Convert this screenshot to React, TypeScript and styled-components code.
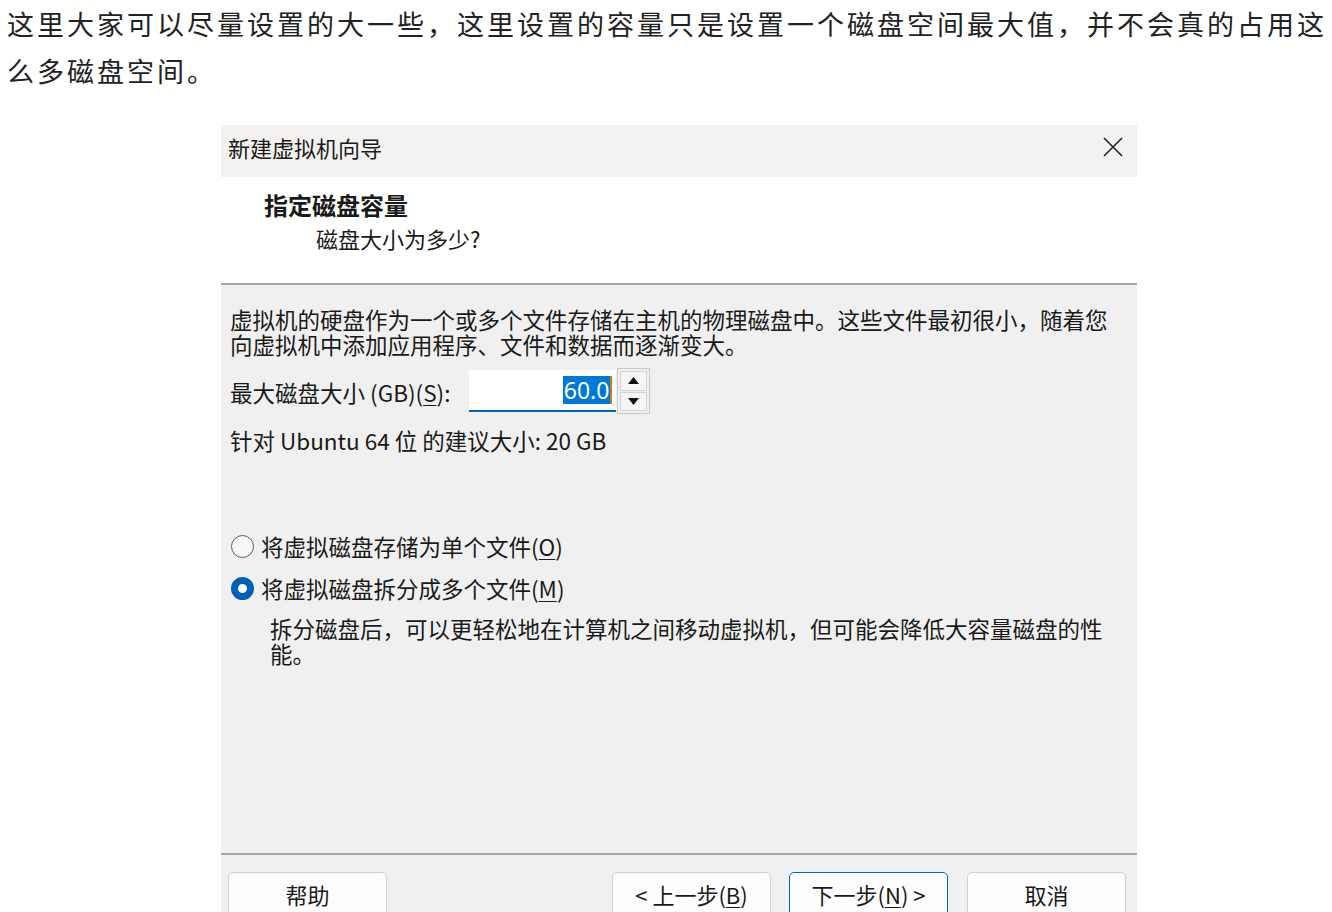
import React from 'react';
import styled, { createGlobalStyle } from 'styled-components';

const GlobalStyle = createGlobalStyle`
  html, body {
    margin: 0;
    padding: 0;
    background: #ffffff;
    overflow: hidden;
  }
`;

const cjk = `"Noto Sans CJK SC", "Noto Sans", sans-serif`;

const Page = styled.div`
  width: 1332px;
  height: 912px;
  overflow: hidden;
`;

const Intro = styled.p`
  margin: 0;
  padding-left: 7px;
  font-family: ${cjk};
  font-size: 27px;
  letter-spacing: 3px;
  line-height: 47px;
  color: #222222;
`;

const Dialog = styled.div`
  width: 916px;
  margin: 31px 0 0 221px;
  font-family: ${cjk};
  color: #1a1a1a;
`;

const TitleBar = styled.div`
  height: 52px;
  box-sizing: border-box;
  background: #f3f2f1;
  display: flex;
  align-items: center;
  justify-content: space-between;
  padding: 0 13px 9px 7px;
  font-size: 22px;
`;

const CloseIcon = () => (
  <svg width="22" height="22" viewBox="0 0 22 22">
    <path d="M2 2 L20 20 M20 2 L2 20" stroke="#222" strokeWidth="1.6" fill="none" />
  </svg>
);

const Header = styled.div`
  height: 108px;
  box-sizing: border-box;
  background: #ffffff;
  padding: 13px 0 0 43px;
  border-bottom: 2px solid #a6a6a6;
`;

const HeaderTitle = styled.div`
  font-size: 24px;
  font-weight: 700;
  line-height: 30px;
`;

const HeaderSub = styled.div`
  font-size: 22px;
  line-height: 30px;
  margin: 3px 0 0 52px;
`;

const Body = styled.div`
  height: 570px;
  box-sizing: border-box;
  background: #f0f0f0;
  padding: 22px 15px 0 9px;
  border-bottom: 2px solid #a6a6a6;
  font-size: 22.5px;
`;

const Para = styled.p<{ indent?: number; top?: number }>`
  margin: ${(p) => p.top ?? 0}px 0 0 ${(p) => p.indent ?? 0}px;
  line-height: 25px;
`;

const SpinRow = styled.div`
  display: flex;
  align-items: center;
  margin-top: 13px;
  height: 42px;
`;

const SpinLabel = styled.span`
  margin-top: 2px;
`;

const SpinInput = styled.div`
  margin-left: 19px;
  width: 147px;
  height: 42px;
  box-sizing: border-box;
  background: #ffffff;
  border-bottom: 2px solid #0067c0;
  display: flex;
  align-items: center;
  justify-content: flex-end;
  padding-right: 4px;
`;

const Selected = styled.span`
  background: #0078d7;
  color: #ffffff;
  font-family: "Noto Sans", sans-serif;
  font-size: 23px;
  line-height: 28px;
  padding: 0 1px;
  border-right: 2px solid #d07a1c;
`;

const SpinButtons = styled.div`
  margin-left: 1px;
  width: 33px;
  height: 46px;
  box-sizing: border-box;
  border: 1px solid #c9c9c9;
  background: #f0f0f0;
  display: flex;
  flex-direction: column;
  padding: 2px;
  gap: 1px;
`;

const SpinBtn = styled.div`
  flex: 1;
  border: 1px solid #d4d4d4;
  background: #f5f5f5;
  display: flex;
  align-items: center;
  justify-content: center;
`;

const Arrow = ({ up }: { up?: boolean }) => (
  <svg width="11" height="7" viewBox="0 0 11 7">
    <path d={up ? 'M0 7 L5.5 0 L11 7 Z' : 'M0 0 L11 0 L5.5 7 Z'} fill="#111" />
  </svg>
);

const RadioRow = styled.div<{ top: number }>`
  display: flex;
  align-items: center;
  height: 30px;
  margin-top: ${(p) => p.top}px;
  padding-left: 1px;
`;

const RadioDot = styled.span<{ checked?: boolean }>`
  width: 23px;
  height: 23px;
  box-sizing: border-box;
  border-radius: 50%;
  margin-right: 7px;
  border: ${(p) => (p.checked ? '7.5px solid #0060b8' : '1.5px solid #5c5c5c')};
  background: ${(p) => (p.checked ? '#ffffff' : '#f7f7f7')};
`;

const Key = styled.span`
  text-decoration: underline;
  text-underline-offset: 3px;
  text-decoration-thickness: 1px;
`;

const Footer = styled.div`
  background: #f0f0f0;
  height: 200px;
  padding: 17px 11px 0 7px;
  display: flex;
  align-items: flex-start;
`;

const Spacer = styled.div`
  flex: 1;
`;

const Button = styled.div<{ primary?: boolean; gap?: number }>`
  width: 159px;
  height: 46px;
  box-sizing: border-box;
  margin-left: ${(p) => p.gap ?? 0}px;
  border: ${(p) => (p.primary ? '1.5px solid #0067c0' : '1px solid #cfcfcf')};
  border-radius: 5px;
  background: #fdfdfd;
  font-size: 22px;
  display: flex;
  align-items: center;
  justify-content: center;
  padding-bottom: 2px;
`;

export default function App() {
  return (
    <Page>
      <GlobalStyle />
      <Intro>
        这里大家可以尽量设置的大一些，这里设置的容量只是设置一个磁盘空间最大值，并不会真的占用这么多磁盘空间。
      </Intro>
      <Dialog>
        <TitleBar>
          <span>新建虚拟机向导</span>
          <CloseIcon />
        </TitleBar>
        <Header>
          <HeaderTitle>指定磁盘容量</HeaderTitle>
          <HeaderSub>磁盘大小为多少?</HeaderSub>
        </Header>
        <Body>
          <Para>
            虚拟机的硬盘作为一个或多个文件存储在主机的物理磁盘中。这些文件最初很小，随着您向虚拟机中添加应用程序、文件和数据而逐渐变大。
          </Para>
          <SpinRow>
            <SpinLabel>
              最大磁盘大小 (GB)(<Key>S</Key>):
            </SpinLabel>
            <SpinInput>
              <Selected>60.0</Selected>
            </SpinInput>
            <SpinButtons>
              <SpinBtn>
                <Arrow up />
              </SpinBtn>
              <SpinBtn>
                <Arrow />
              </SpinBtn>
            </SpinButtons>
          </SpinRow>
          <Para top={16}>针对 Ubuntu 64 位 的建议大小: 20 GB</Para>
          <RadioRow top={78}>
            <RadioDot />
            <span>
              将虚拟磁盘存储为单个文件(<Key>O</Key>)
            </span>
          </RadioRow>
          <RadioRow top={12}>
            <RadioDot checked />
            <span>
              将虚拟磁盘拆分成多个文件(<Key>M</Key>)
            </span>
          </RadioRow>
          <Para indent={40} top={13}>
            拆分磁盘后，可以更轻松地在计算机之间移动虚拟机，但可能会降低大容量磁盘的性能。
          </Para>
        </Body>
        <Footer>
          <Button>帮助</Button>
          <Spacer />
          <Button>
            &lt; 上一步(<Key>B</Key>)
          </Button>
          <Button primary gap={18}>
            下一步(<Key>N</Key>) &gt;
          </Button>
          <Button gap={19}>取消</Button>
        </Footer>
      </Dialog>
    </Page>
  );
}
